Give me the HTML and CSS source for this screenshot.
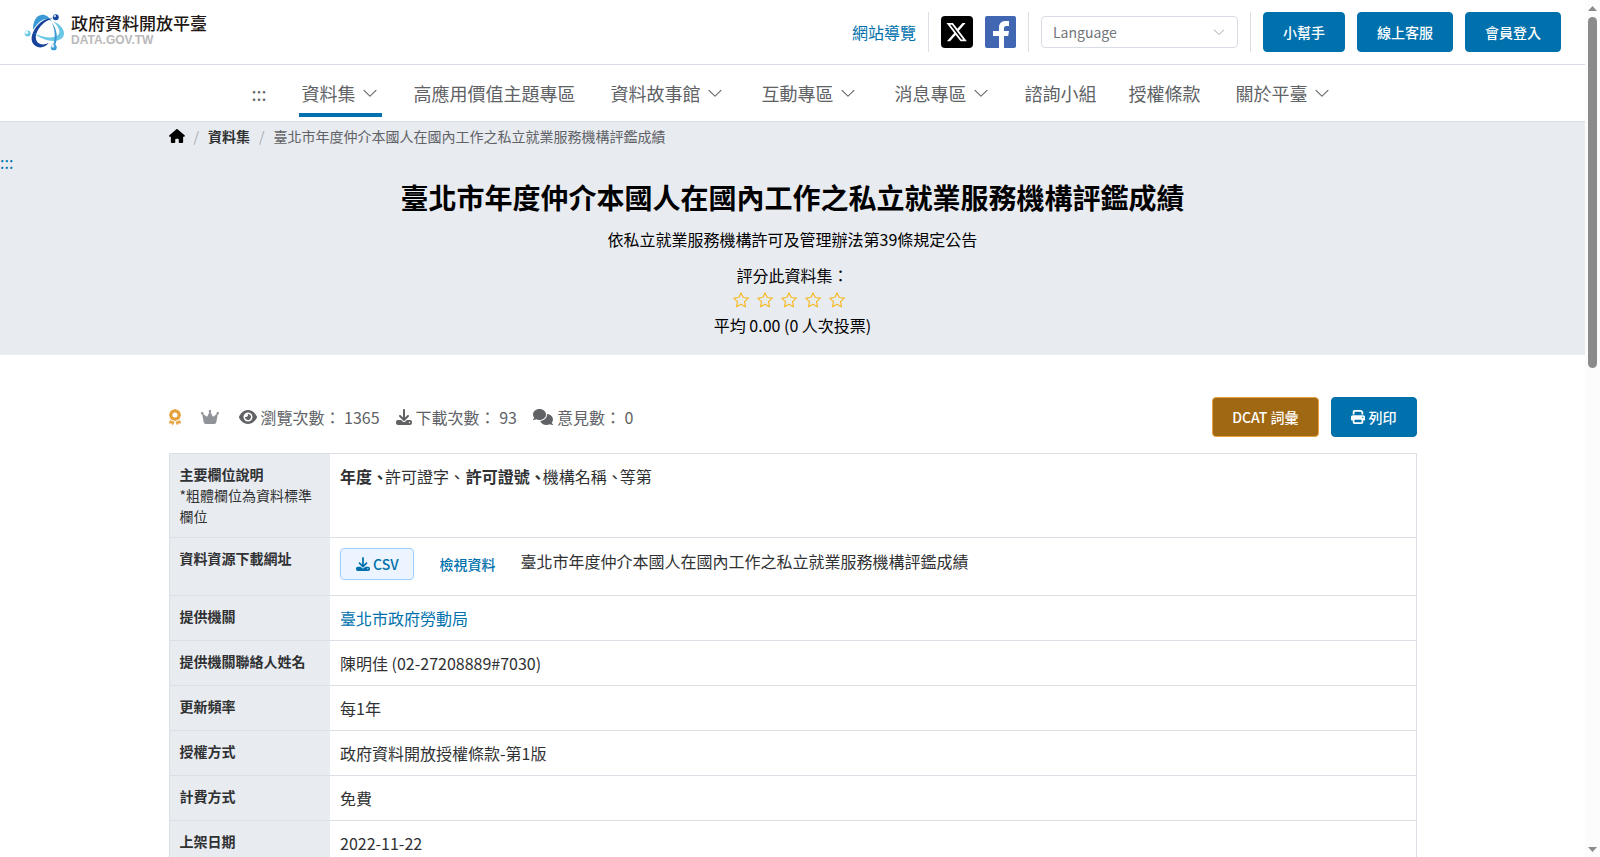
FILE: index.html
```html
<!DOCTYPE html>
<html lang="zh-Hant-TW">
<head>
<meta charset="utf-8">
<title>臺北市年度仲介本國人在國內工作之私立就業服務機構評鑑成績 | 政府資料開放平臺</title>
<link rel="stylesheet" href="styles.css">
</head>
<body>
<svg class="sprite" aria-hidden="true">
  <symbol id="chevron" viewBox="0 0 1024 1024"><path d="M831.872 340.864 512 652.672 192.128 340.864a30.592 30.592 0 0 0-42.752 0 29.12 29.12 0 0 0 0 41.6L489.664 714.24a32 32 0 0 0 44.672 0l340.288-331.712a29.12 29.12 0 0 0 0-41.728 30.592 30.592 0 0 0-42.752 0z"/></symbol>
  <symbol id="star" viewBox="0 0 18 18"><path d="M9 1.800l2.200 4.700 5.100.6-3.800 3.500 1 5.100L9 13.200l-4.500 2.500 1-5.100L1.700 7.100l5.100-.6z" fill="none" stroke="currentColor" stroke-width="1.200" stroke-linejoin="round"/></symbol>
  <symbol id="download" viewBox="0 0 512 512"><path d="M288 32c0-17.700-14.300-32-32-32s-32 14.300-32 32V274.700l-73.400-73.400c-12.500-12.500-32.800-12.500-45.300 0s-12.500 32.800 0 45.300l128 128c12.500 12.500 32.800 12.500 45.300 0l128-128c12.500-12.500 12.500-32.800 0-45.300s-32.800-12.500-45.300 0L288 274.700V32zM64 352c-35.300 0-64 28.700-64 64v32c0 35.300 28.700 64 64 64H448c35.300 0 64-28.700 64-64V416c0-35.300-28.700-64-64-64H346.500l-45.300 45.300c-25 25-65.500 25-90.500 0L165.500 352H64zm368 56a24 24 0 1 1 0 48 24 24 0 1 1 0-48z"/></symbol>
</svg>
<div class="window">
<div class="page">
  <header class="topbar">
    <a class="logo" href="#">
      <svg class="logo-mark" viewBox="70 38 124 116" aria-hidden="true">
        <path d="M97 88C97 62 107 43 125 42c13 0 21 8 29 20-13-9-25-8-34 0-9 7-16 16-23 26z" fill="#3a9ad6"/>
        <path d="M157 54c-24 6-42 25-49 44-5 13-2 25 8 31 8 5 18 4 29-1-10 13-28 17-40 9-13-8-15-24-8-40 11-27 36-46 60-43z" fill="#17439b"/>
        <path d="M159 62c20 9 32 23 32 37 0 18-22 26-47 21-17-3-34-12-45-23 15 9 34 15 50 14 18-1 29-8 28-19-1-10-9-20-18-30z" fill="#6ac8e4"/>
        <path d="M154 66c16 20 20 46 9 72l-5-3c8-24 6-47-4-69z" fill="#3a9ad6"/>
        <circle cx="166" cy="50" r="9" fill="#17439b"/><circle cx="163" cy="46" r="4" fill="#b9d4ee"/>
        <circle cx="81" cy="99" r="9" fill="#6ac8e4"/><circle cx="78" cy="96" r="5" fill="#e4f6fb"/>
        <circle cx="160" cy="141" r="9" fill="#3a9ad6"/><circle cx="157" cy="137" r="5" fill="#d4ebf8"/>
      </svg>
      <span class="logo-text"><span class="logo-name">政府資料開放平臺</span><span class="logo-domain">DATA.GOV.TW</span></span>
    </a>
    <div class="tools">
      <a class="link" href="#">網站導覽</a>
      <span class="divider"></span>
      <a class="social" href="#" aria-label="X"><svg viewBox="0 0 32 32"><rect width="32" height="32" rx="4"/><path transform="translate(5.500 6) scale(1.270)" fill="#fff" d="M12.600.75h2.454l-5.360 6.142L16 15.250h-4.937l-3.867-5.070-4.425 5.070H.316l5.733-6.570L0 .75h5.063l3.495 4.633L12.601.75Zm-.86 13.028h1.360L4.323 2.145H2.865z"/></svg></a>
      <a class="social facebook" href="#" aria-label="Facebook"><svg viewBox="0 0 31 32"><rect width="31" height="32" rx="2"/><path fill="#fff" d="M14 32V20H8v-5h6v-3.500C14 7.500 16.500 5 20.500 5H24v5h-2.500c-2 0-2.500 1-2.500 2.500V15h5l-.8 5H19v12z"/></svg></a>
      <span class="divider"></span>
      <div class="language">
        <select aria-label="Language"><option>Language</option></select>
        <svg class="language-arrow" aria-hidden="true"><use href="#chevron"/></svg>
      </div>
      <span class="divider"></span>
      <button class="btn primary">小幫手</button>
      <button class="btn primary">線上客服</button>
      <button class="btn primary">會員登入</button>
    </div>
  </header>
  <nav class="menu">
    <a class="item" href="#">:::</a>
    <a class="item sub active" href="#">資料集<svg><use href="#chevron"/></svg></a>
    <a class="item" href="#">高應用價值主題專區</a>
    <a class="item sub" href="#">資料故事館<svg><use href="#chevron"/></svg></a>
    <a class="item sub" href="#">互動專區<svg><use href="#chevron"/></svg></a>
    <a class="item sub" href="#">消息專區<svg><use href="#chevron"/></svg></a>
    <a class="item" href="#">諮詢小組</a>
    <a class="item" href="#">授權條款</a>
    <a class="item sub" href="#">關於平臺<svg><use href="#chevron"/></svg></a>
  </nav>
  <section class="banner">
    <div class="container breadcrumb">
      <a href="#" aria-label="首頁"><svg class="home" viewBox="0 0 576 512"><path d="M575.800 255.500c0 18-15 32.100-32 32.100h-32l.7 160.200c0 2.700-.2 5.400-.5 8.100V472c0 22.100-17.900 40-40 40H456c-1.100 0-2.200 0-3.300-.1c-1.400 .1-2.800 .1-4.200 .1H416 392c-22.100 0-40-17.900-40-40V448 384c0-17.700-14.300-32-32-32H256c-17.700 0-32 14.300-32 32v64 24c0 22.100-17.900 40-40 40H160 128.100c-1.500 0-3-.1-4.500-.2c-1.200 .1-2.400 .2-3.600 .2H104c-22.100 0-40-17.900-40-40V360c0-.9 0-1.900 .1-2.800V287.600H32c-18 0-32-14-32-32.100c0-9 3-17 10-24L266.400 8c7-7 15-8 22-8s15 2 21 7L564.800 231.500c8 7 12 15 11 24z"/></svg></a>
      <span class="slash">/</span>
      <a class="crumb-link" href="#">資料集</a>
      <span class="slash">/</span>
      <span>臺北市年度仲介本國人在國內工作之私立就業服務機構評鑑成績</span>
    </div>
    <a class="anchor" href="#">:::</a>
    <h1>臺北市年度仲介本國人在國內工作之私立就業服務機構評鑑成績</h1>
    <p class="summary">依私立就業服務機構許可及管理辦法第39條規定公告</p>
    <div class="rating">
      <span>評分此資料集：</span>
      <span class="stars"><svg><use href="#star"/></svg><svg><use href="#star"/></svg><svg><use href="#star"/></svg><svg><use href="#star"/></svg><svg><use href="#star"/></svg></span>
      <span>平均 0.00 (0 人次投票)</span>
    </div>
  </section>
  <main class="container">
    <div class="meta">
      <svg class="ico award" viewBox="0 0 384 512"><path d="M173.800 5.500c11-7.300 25.400-7.300 36.400 0L228 17.200c6 3.900 13 5.800 20.100 5.400l21.300-1.300c13.200-.8 25.600 6.400 31.500 18.200l9.600 19.100c3.200 6.400 8.400 11.500 14.700 14.700L344.500 83c11.800 5.900 19 18.300 18.200 31.500l-1.300 21.300c-.4 7.100 1.500 14.200 5.400 20.100l11.800 17.800c7.300 11 7.300 25.400 0 36.400L366.800 228c-3.900 6-5.800 13-5.400 20.100l1.300 21.300c.8 13.200-6.400 25.600-18.200 31.500l-19.100 9.600c-6.400 3.200-11.500 8.400-14.700 14.700L301 344.500c-5.900 11.800-18.300 19-31.500 18.200l-21.300-1.300c-7.100-.4-14.200 1.500-20.100 5.400l-17.800 11.800c-11 7.300-25.400 7.300-36.400 0L156 366.800c-6-3.900-13-5.800-20.100-5.400l-21.300 1.300c-13.200 .8-25.600-6.400-31.500-18.200l-9.600-19.100c-3.200-6.400-8.400-11.500-14.700-14.700L39.500 301c-11.800-5.900-19-18.300-18.200-31.500l1.300-21.300c.4-7.100-1.500-14.200-5.400-20.100L5.500 210.200c-7.300-11-7.300-25.400 0-36.400L17.200 156c3.900-6 5.800-13 5.400-20.100l-1.300-21.300c-.8-13.200 6.400-25.600 18.200-31.500l19.100-9.600C65 70.200 70.200 65 73.400 58.600L83 39.500c5.900-11.800 18.300-19 31.500-18.200l21.300 1.300c7.100 .4 14.200-1.500 20.100-5.400L173.800 5.500zM272 192a80 80 0 1 0 -160 0 80 80 0 1 0 160 0zM1.300 441.800L44.400 339.300c.2 .1 .3 .2 .4 .4l9.600 19.100c11.700 23.200 36 37.300 62 35.800l21.300-1.300c.2 0 .5 0 .7 .2l17.800 11.800c5.100 3.300 10.500 5.900 16.100 7.700l-37.600 89.300c-2.300 5.500-7.400 9.200-13.300 9.700s-11.600-2.200-14.800-7.200L74.400 455.500l-56.100 8.300c-5.700 .8-11.400-1.500-15-6s-4.300-10.700-2.100-16zm248 60.400L211.700 413c5.600-1.800 11-4.300 16.100-7.700l17.800-11.800c.2-.1 .4-.2 .7-.2l21.300 1.300c26 1.500 50.300-12.600 62-35.800l9.600-19.100c.1-.2 .2-.3 .4-.4l43.200 102.500c2.200 5.300 1.400 11.400-2.100 16s-9.300 6.900-15 6l-56.100-8.300-32.200 49.200c-3.200 5-8.900 7.700-14.800 7.200s-11-4.300-13.300-9.700z"/></svg>
      <svg class="ico crown" viewBox="0 0 576 512"><path d="M309 106c11.400-7 19-19.700 19-34c0-22.100-17.900-40-40-40s-40 17.900-40 40c0 14.400 7.600 27 19 34L209.700 220.600c-9.100 18.200-32.700 23.400-48.600 10.700L72 160c5-6.700 8-15 8-24c0-22.100-17.900-40-40-40S0 113.900 0 136s17.900 40 40 40c.2 0 .5 0 .7 0L86.400 427.400c5.500 30.400 32 52.600 63 52.600H426.600c30.900 0 57.400-22.100 63-52.600L535.300 176c.2 0 .5 0 .7 0c22.100 0 40-17.900 40-40s-17.900-40-40-40s-40 17.900-40 40c0 9 3 17.300 8 24l-89.100 71.300c-15.900 12.700-39.500 7.500-48.600-10.700L309 106z"/></svg>
      <span class="stat"><svg class="ico" viewBox="0 0 576 512"><path d="M288 32c-80.800 0-145.500 36.800-192.600 80.600C48.600 156 17.300 208 2.500 243.700c-3.300 7.900-3.300 16.700 0 24.600C17.300 304 48.600 356 95.400 399.400C142.500 443.200 207.200 480 288 480s145.500-36.800 192.600-80.600c46.800-43.500 78.100-95.400 93-131.100c3.300-7.900 3.300-16.700 0-24.600c-14.900-35.700-46.200-87.700-93-131.100C433.500 68.800 368.800 32 288 32zM144 256a144 144 0 1 1 288 0 144 144 0 1 1 -288 0zm144-64c0 35.300-28.700 64-64 64c-7.100 0-13.900-1.200-20.300-3.300c-5.500-1.800-11.900 1.600-11.700 7.400c.3 6.900 1.300 13.800 3.200 20.700c13.700 51.200 66.400 81.600 117.600 67.900s81.600-66.400 67.900-117.600c-11.100-41.500-47.800-69.400-88.600-71.100c-5.800-.2-9.200 6.100-7.400 11.700c2.100 6.400 3.300 13.200 3.300 20.300z"/></svg>瀏覽次數： 1365</span>
      <span class="stat"><svg class="ico" viewBox="0 0 512 512"><use href="#download"/></svg>下載次數： 93</span>
      <span class="stat"><svg class="ico" viewBox="0 0 640 512"><path d="M208 352c114.900 0 208-78.800 208-176S322.900 0 208 0S0 78.800 0 176c0 38.600 14.700 74.300 39.600 103.400c-3.500 9.400-8.700 17.700-14.200 24.700c-4.800 6.200-9.700 11-13.300 14.300c-1.800 1.600-3.300 2.900-4.300 3.700c-.5 .4-.9 .7-1.100 .8l-.2 .2C1 327.200-1.400 334.400 .8 340.900S9.100 352 16 352c21.800 0 43.800-5.600 62.100-12.500c9.200-3.500 17.800-7.400 25.200-11.400C134.100 343.300 169.800 352 208 352zM448 176c0 112.300-99.100 196.900-216.500 207C255.800 457.400 336.400 512 432 512c38.200 0 73.900-8.700 104.700-23.900c7.500 4 16 7.900 25.200 11.400c18.300 6.900 40.300 12.500 62.100 12.500c6.900 0 13.100-4.500 15.200-11.100c2.100-6.600-.2-13.800-5.800-17.900l-.2-.2c-.2-.2-.6-.4-1.100-.8c-1-.8-2.500-2-4.300-3.700c-3.600-3.300-8.500-8.100-13.300-14.300c-5.500-7-10.700-15.400-14.200-24.700c24.900-29 39.600-64.700 39.600-103.400c0-92.800-84.900-168.900-192.600-175.500c.4 5.100 .6 10.300 .6 15.500z"/></svg>意見數： 0</span>
      <div class="actions">
        <button class="btn dcat">DCAT 詞彙</button>
        <button class="btn primary"><svg class="btn-ico" viewBox="0 0 512 512"><path d="M128 0C92.700 0 64 28.700 64 64v96h64V64H354.700L384 93.300V160h64V93.300c0-17-6.700-33.300-18.700-45.300L400 18.700C388 6.700 371.700 0 354.700 0H128zM384 352v32 64H128V384 368 352H384zm64 32h32c17.700 0 32-14.300 32-32V256c0-35.300-28.700-64-64-64H64c-35.300 0-64 28.700-64 64v96c0 17.700 14.300 32 32 32H64v64c0 35.300 28.700 64 64 64H384c35.300 0 64-28.700 64-64V384zM432 248a24 24 0 1 1 0 48 24 24 0 1 1 0-48z"/></svg>列印</button>
      </div>
    </div>
    <table class="detail">
      <tbody>
      <tr><th scope="row">主要欄位說明<br><span class="note">*粗體欄位為資料標準欄位</span></th><td><b class="field">年度、</b><span class="field">許可證字、</span> <b class="field">許可證號、</b><span class="field">機構名稱、</span><span class="field">等第</span></td></tr>
      <tr><th scope="row">資料資源下載網址</th><td><div class="resource"><button class="btn csv"><svg class="btn-ico"><use href="#download"/></svg>CSV</button><button class="btn text">檢視資料</button><span class="resource-name">臺北市年度仲介本國人在國內工作之私立就業服務機構評鑑成績</span></div></td></tr>
      <tr><th scope="row">提供機關</th><td><a class="link" href="#">臺北市政府勞動局</a></td></tr>
      <tr><th scope="row">提供機關聯絡人姓名</th><td>陳明佳 (02-27208889#7030)</td></tr>
      <tr><th scope="row">更新頻率</th><td>每1年</td></tr>
      <tr><th scope="row">授權方式</th><td>政府資料開放授權條款-第1版</td></tr>
      <tr><th scope="row">計費方式</th><td>免費</td></tr>
      <tr><th scope="row">上架日期</th><td>2022-11-22</td></tr>
      </tbody>
    </table>
  </main>
</div>
<div class="scrollbar" aria-hidden="true">
  <svg class="scroll-arrow" viewBox="0 0 9 5"><path d="M0 5 4.500 0 9 5z"/></svg>
  <div class="track"><div class="thumb"></div></div>
  <svg class="scroll-arrow" viewBox="0 0 9 5"><path d="M0 0 4.500 5 9 0z"/></svg>
</div>
</div>
</body>
</html>
```
FILE: styles.css
```css
* { box-sizing: border-box; }
body {
  margin: 0;
  font: 16px/24px "Noto Sans CJK TC", sans-serif;
  color: #303133;
  background: #fff;
}
a { color: inherit; text-decoration: none; }
svg { display: block; fill: currentColor; flex: none; }
button, select { font: inherit; cursor: pointer; }
.sprite { display: none; }
.window {
  display: grid;
  grid-template-columns: minmax(0, 1fr) 15px;
  height: 100vh;
  overflow: hidden;
}
.page { overflow: hidden; }
.container { width: 79%; max-width: 1248px; margin: 0 auto; }
.link { color: #0071ad; }

.topbar {
  display: flex;
  justify-content: space-between;
  align-items: center;
  height: 65px;
  padding: 0 24px;
  border-bottom: 1px solid #d8dce5;
}
.logo { display: flex; align-items: center; gap: 6px; }
.logo-mark { width: 41px; height: 39px; }
.logo-text { display: flex; flex-direction: column; gap: 1px; padding-bottom: 5px; }
.logo-name { font-size: 17px; line-height: 20px; font-weight: 500; color: #231815; }
.logo-domain { font: bold 12px/12px "Liberation Sans", sans-serif; color: #b9b9ba; }
.tools { display: flex; align-items: center; gap: 12px; }
.divider { width: 1px; height: 40px; background: #dcdfe6; }
.social svg { width: 32px; height: 32px; color: #000; }
.facebook svg { width: 31px; color: #4267b2; }
.language { position: relative; width: 197px; }
.language select {
  display: block;
  width: 100%;
  height: 32px;
  padding: 0 11px;
  font-size: 14px;
  color: #73767a;
  background: #fff;
  border: 1px solid #d8dce5;
  border-radius: 4px;
  appearance: none;
}
.language-arrow {
  position: absolute;
  right: 12px;
  top: 9px;
  width: 14px;
  height: 14px;
  color: #a8abb2;
  pointer-events: none;
}
.btn {
  display: flex;
  align-items: center;
  justify-content: center;
  gap: 4px;
  height: 40px;
  padding: 0 19px;
  font-size: 14px;
  line-height: 14px;
  font-weight: 500;
  border: 1px solid transparent;
  border-radius: 4px;
}
.btn-ico { width: 14px; height: 14px; }
.primary { color: #fff; background: #0071ad; border-color: #0071ad; }
.dcat { color: #fff; background: #a16814; border-color: #e6a23c; }

.menu {
  display: flex;
  justify-content: center;
  gap: 32px;
  border-bottom: 1px solid #d8dce5;
  font-size: 18px;
  line-height: 56px;
  color: #606266;
}
.item { display: flex; align-items: center; gap: 5px; position: relative; }
.item svg { width: 18px; height: 18px; }
.sub { padding: 0 3px; }
.active::after {
  content: "";
  position: absolute;
  left: 0;
  right: 0;
  bottom: 4px;
  height: 4px;
  background: #0071ad;
}

.banner {
  background: #e8ebf0;
  color: #000;
  padding: 2px 0 18px;
  text-align: center;
}
.breadcrumb {
  display: flex;
  align-items: center;
  gap: 9px;
  font-size: 14px;
  line-height: 24px;
  color: #606266;
}
.home { width: 16px; height: 14px; color: #000; }
.crumb-link { font-weight: 700; color: #303133; }
.slash { color: #a8abb2; }
.anchor { display: block; text-align: left; line-height: 28px; color: #0071ad; }
h1 { margin: 0; font-size: 28px; line-height: 42px; font-weight: 700; }
.summary { margin: 9px 0 12px; }
.rating { display: flex; flex-direction: column; align-items: center; }
.rating span { line-height: 24px; }
.rating .stars { display: flex; gap: 6px; padding: 4px 8px 4px 0; color: #f7ba2a; }
.stars svg { width: 18px; height: 18px; }

.meta {
  display: flex;
  align-items: center;
  padding: 42px 0 16px;
  color: #606266;
}
.ico { height: 16px; }
.award { width: 12px; margin-right: 20px; color: #e6a23c; }
.crown { width: 18px; margin-right: 20px; color: #909399; }
.stat { display: flex; align-items: center; gap: 4px; margin-right: 16px; }
.actions { display: flex; gap: 12px; margin-left: auto; }

.detail {
  width: 100%;
  border-collapse: collapse;
  border: 1px solid #dcdfe6;
}
.detail tr { border-bottom: 1px solid #dcdfe6; }
.detail th {
  width: 161px;
  padding: 10px;
  vertical-align: top;
  text-align: left;
  font-size: 14px;
  line-height: 21px;
  background: #e8ebf0;
}
.note { font-weight: 400; }
.detail td { padding: 10px; vertical-align: top; }
.field { margin-right: -3px; }
.resource { display: flex; gap: 9px; padding-bottom: 5px; }
.resource .btn { height: 32px; gap: 3px; padding: 0 15px; color: #0071ad; }
.csv { background: #ecf5ff; border-color: #a0cfff; }
.text { background: transparent; }
.resource-name { line-height: 26px; }

.scrollbar {
  display: flex;
  flex-direction: column;
  align-items: center;
  padding: 6px 0 5px;
  gap: 4px;
  color: #8b8b8b;
  background: #fcfcfc;
}
.scroll-arrow { width: 9px; height: 5px; }
.track { flex: 1; padding-top: 2px; }
.thumb { width: 9px; height: 351px; border-radius: 5px; background: #8b8b8b; }
```
